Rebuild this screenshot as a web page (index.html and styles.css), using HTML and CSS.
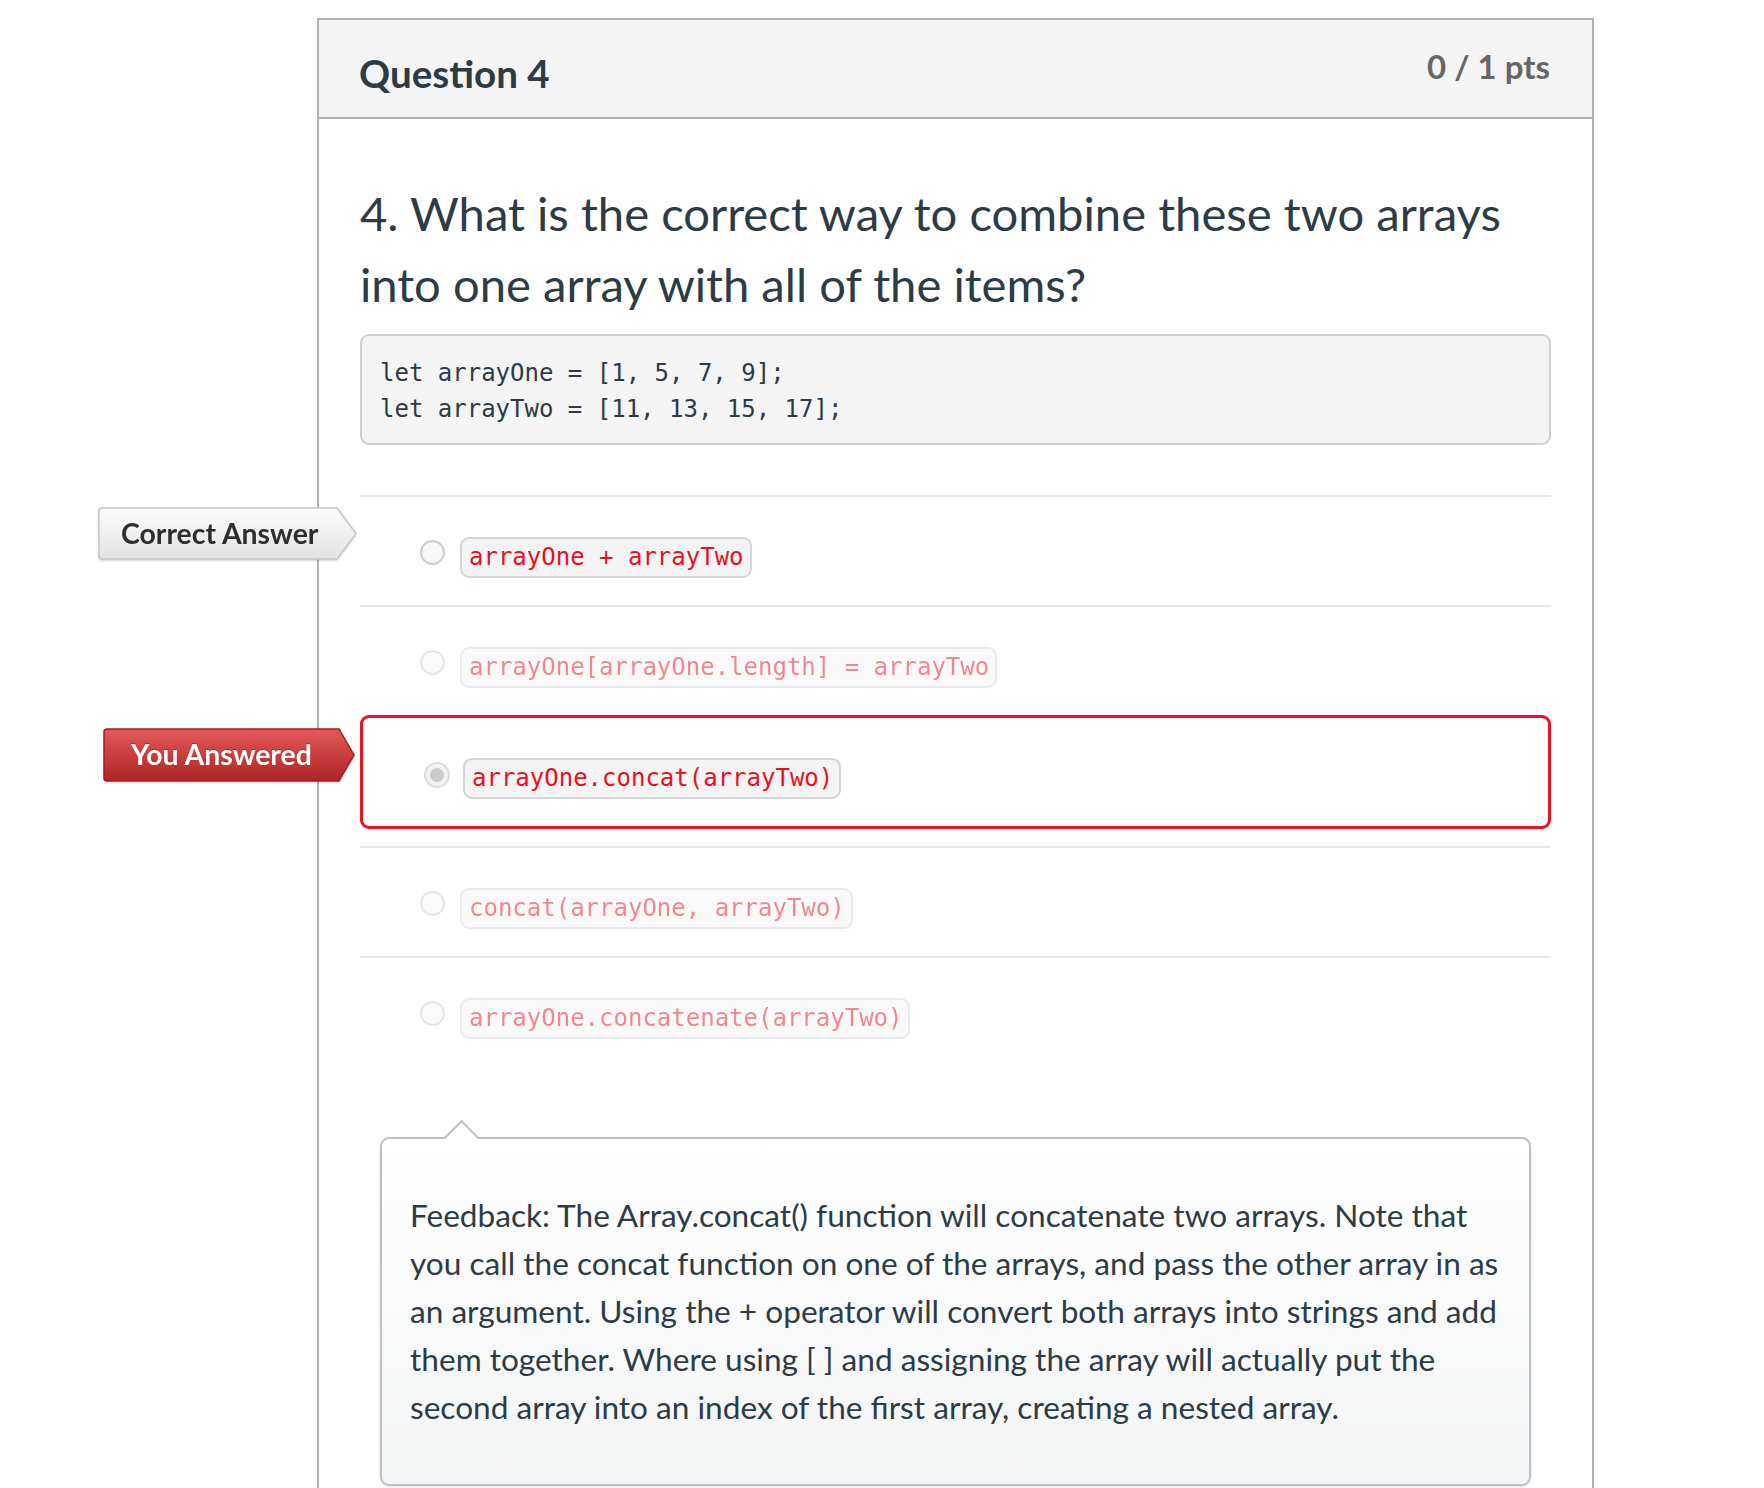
FILE: index.html
```html
<!DOCTYPE html>
<html lang="en">
<head>
<meta charset="utf-8">
<title>Question 4</title>
<link rel="stylesheet" href="styles.css">
</head>
<body>
<div class="page">
  <div class="card">
    <div class="card-header">
      <h2 class="q-title">Question 4</h2>
      <span class="q-pts">0 / 1 pts</span>
    </div>
    <div class="card-body">
      <p class="q-text">4. What is the correct way to combine these two arrays into one array with all of the items?</p>
      <pre class="code-block">let arrayOne = [1, 5, 7, 9];
let arrayTwo = [11, 13, 15, 17];</pre>

      <div class="answers">
        <div class="answer">
          <div class="flag flag-correct">
            <svg class="flag-shape" viewBox="0 0 260 53" width="260" height="53" aria-hidden="true">
              <defs>
                <linearGradient id="gCorrect" x1="0" y1="0" x2="0" y2="1">
                  <stop offset="0" stop-color="#fdfdfd"/>
                  <stop offset="1" stop-color="#e2e2e2"/>
                </linearGradient>
              </defs>
              <path d="M4 1 H239 L258 26.5 L239 52 H4 Q1 52 1 49 V4 Q1 1 4 1 Z" fill="url(#gCorrect)" stroke="#c6c6c6" stroke-width="1.5"/>
            </svg>
            <span class="flag-text">Correct Answer</span>
          </div>
          <div class="answer-inner">
            <span class="radio"></span>
            <code class="pill">arrayOne + arrayTwo</code>
          </div>
        </div>

        <div class="answer">
          <div class="answer-inner faded">
            <span class="radio"></span>
            <code class="pill">arrayOne[arrayOne.length] = arrayTwo</code>
          </div>
        </div>

        <div class="answer answer-selected">
          <div class="flag flag-wrong">
            <svg class="flag-shape" viewBox="0 0 252 54" width="252" height="54" aria-hidden="true">
              <defs>
                <linearGradient id="gWrong" x1="0" y1="0" x2="0" y2="1">
                  <stop offset="0" stop-color="#e45858"/>
                  <stop offset="1" stop-color="#ae2323"/>
                </linearGradient>
              </defs>
              <path d="M4 1 H236 L251 27 L236 53 H4 Q1 53 1 50 V4 Q1 1 4 1 Z" fill="url(#gWrong)" stroke="#a52020" stroke-width="1.5"/>
            </svg>
            <span class="flag-text">You Answered</span>
          </div>
          <div class="answer-inner">
            <span class="radio radio-checked"></span>
            <code class="pill">arrayOne.concat(arrayTwo)</code>
          </div>
        </div>

        <div class="answer">
          <div class="answer-inner faded">
            <span class="radio"></span>
            <code class="pill">concat(arrayOne, arrayTwo)</code>
          </div>
        </div>

        <div class="answer">
          <div class="answer-inner faded">
            <span class="radio"></span>
            <code class="pill">arrayOne.concatenate(arrayTwo)</code>
          </div>
        </div>
      </div>

      <div class="feedback">
        <p class="feedback-text">Feedback: The Array.concat() function will concatenate two arrays. Note that<br>you call the concat function on one of the arrays, and pass the other array in as<br>an argument. Using the + operator will convert both arrays into strings and add<br>them together. Where using [ ] and assigning the array will actually put the<br>second array into an index of the first array, creating a nested array.</p>
      </div>
    </div>
  </div>
</div>
</body>
</html>
```

FILE: styles.css
```css
html, body {
  margin: 0;
  padding: 0;
  background: #ffffff;
}

body {
  font-family: "Lato", "Open Sans", "Liberation Sans", sans-serif;
  color: #2d3b45;
  overflow: hidden;
  height: 1488px;
}

.page {
  padding: 18px 0 0 317px;
}

.card {
  width: 1277px;
  box-sizing: border-box;
  border: 2px solid #b0b0b0;
  border-bottom: none;
  background: #fff;
}

.card-header {
  height: 99px;
  box-sizing: border-box;
  background: #f4f4f4;
  border-bottom: 2px solid #b0b0b0;
  display: flex;
  justify-content: space-between;
  align-items: flex-start;
  padding: 29px 42px 0 40px;
}

.q-title {
  margin: 5px 0 0;
  font-size: 38.6px;
  line-height: 39px;
  font-weight: 700;
  color: #2d3b45;
}

.q-pts {
  font-size: 33px;
  line-height: 34px;
  font-weight: 700;
  color: #666666;
}

.card-body {
  padding: 58px 41px 200px 41px;
}

.q-text {
  margin: 0;
  font-size: 47.2px;
  line-height: 71px;
  font-weight: 400;
  color: #2d3b45;
}

.code-block {
  margin: 15px 0 0;
  box-sizing: border-box;
  height: 111px;
  padding: 19px 18px 17px;
  background: #f4f4f4;
  border: 2px solid #cfcfcf;
  border-radius: 9px;
  font-family: "DejaVu Sans Mono", "Liberation Mono", monospace;
  font-size: 24px;
  line-height: 36px;
  color: #2d3b45;
}

.answers {
  margin-top: 50px;
}

.answer {
  position: relative;
  border-top: 2px solid #e8e8e8;
  padding: 40px 0 27px;
}

.answer-selected {
  border: 3px solid #f2111e;
  border-radius: 9px;
  padding: 40px 0 27px;
  margin-bottom: 17px;
}

.answer-inner {
  display: flex;
  align-items: flex-start;
  padding-left: 60px;
}

.faded {
  opacity: 0.5;
}

.radio {
  width: 25px;
  height: 25px;
  box-sizing: border-box;
  margin-top: 3px;
  margin-right: 15px;
  border-radius: 50%;
  border: 2px solid #cdcdcd;
  background: #f7f7f7;
  flex: none;
}

.radio-checked {
  margin-top: 4px;
  margin-left: 1px;
  margin-right: 13px;
  width: 26px;
  height: 26px;
  border: 2px solid #dcdcdc;
  background: #f2f2f2;
  display: flex;
  align-items: center;
  justify-content: center;
}

.radio-checked::after {
  content: "";
  width: 14px;
  height: 14px;
  border-radius: 50%;
  background: #cccccc;
}

.pill {
  display: inline-block;
  box-sizing: border-box;
  height: 41px;
  padding: 0 6px 0 7px;
  background: #f4f4f4;
  border: 2px solid #d2d6da;
  border-radius: 9px;
  font-family: "DejaVu Sans Mono", "Liberation Mono", monospace;
  font-size: 24px;
  line-height: 37px;
  color: #e8101e;
  white-space: pre;
}

.flag {
  position: absolute;
  left: -262px;
  top: 10px;
  width: 260px;
  height: 53px;
  filter: drop-shadow(0 1px 1px rgba(0, 0, 0, 0.18));
}

.flag-wrong {
  left: -260px;
  top: 10px;
  width: 252px;
  height: 54px;
}

.flag-shape {
  position: absolute;
  left: 0;
  top: 0;
}

.flag-text {
  position: relative;
  display: block;
  font-size: 28.4px;
  font-weight: 700;
  line-height: 53px;
  white-space: nowrap;
}

.flag-correct .flag-text {
  padding-left: 23px;
  color: #2e2e2e;
}

.flag-wrong .flag-text {
  padding-left: 28px;
  line-height: 52px;
  color: #ffffff;
  text-shadow: 0 -1px 0 rgba(0, 0, 0, 0.25);
}

.feedback {
  position: relative;
  margin: 71px 20px 0;
  border: 2px solid #b9c1c9;
  border-radius: 9px;
  background: linear-gradient(#ffffff, #f3f4f5);
  box-shadow: 0 1px 3px rgba(0, 0, 0, 0.12);
  padding: 52px 12px 53px 28px;
}

.feedback::before {
  content: "";
  position: absolute;
  top: -14px;
  left: 67px;
  width: 25px;
  height: 25px;
  box-sizing: border-box;
  background: #ffffff;
  border-left: 2px solid #b9c1c9;
  border-top: 2px solid #b9c1c9;
  transform: rotate(45deg);
}

.feedback-text {
  margin: 0;
  font-size: 31.6px;
  line-height: 48px;
  color: #2d3b45;
  white-space: nowrap;
}
```
